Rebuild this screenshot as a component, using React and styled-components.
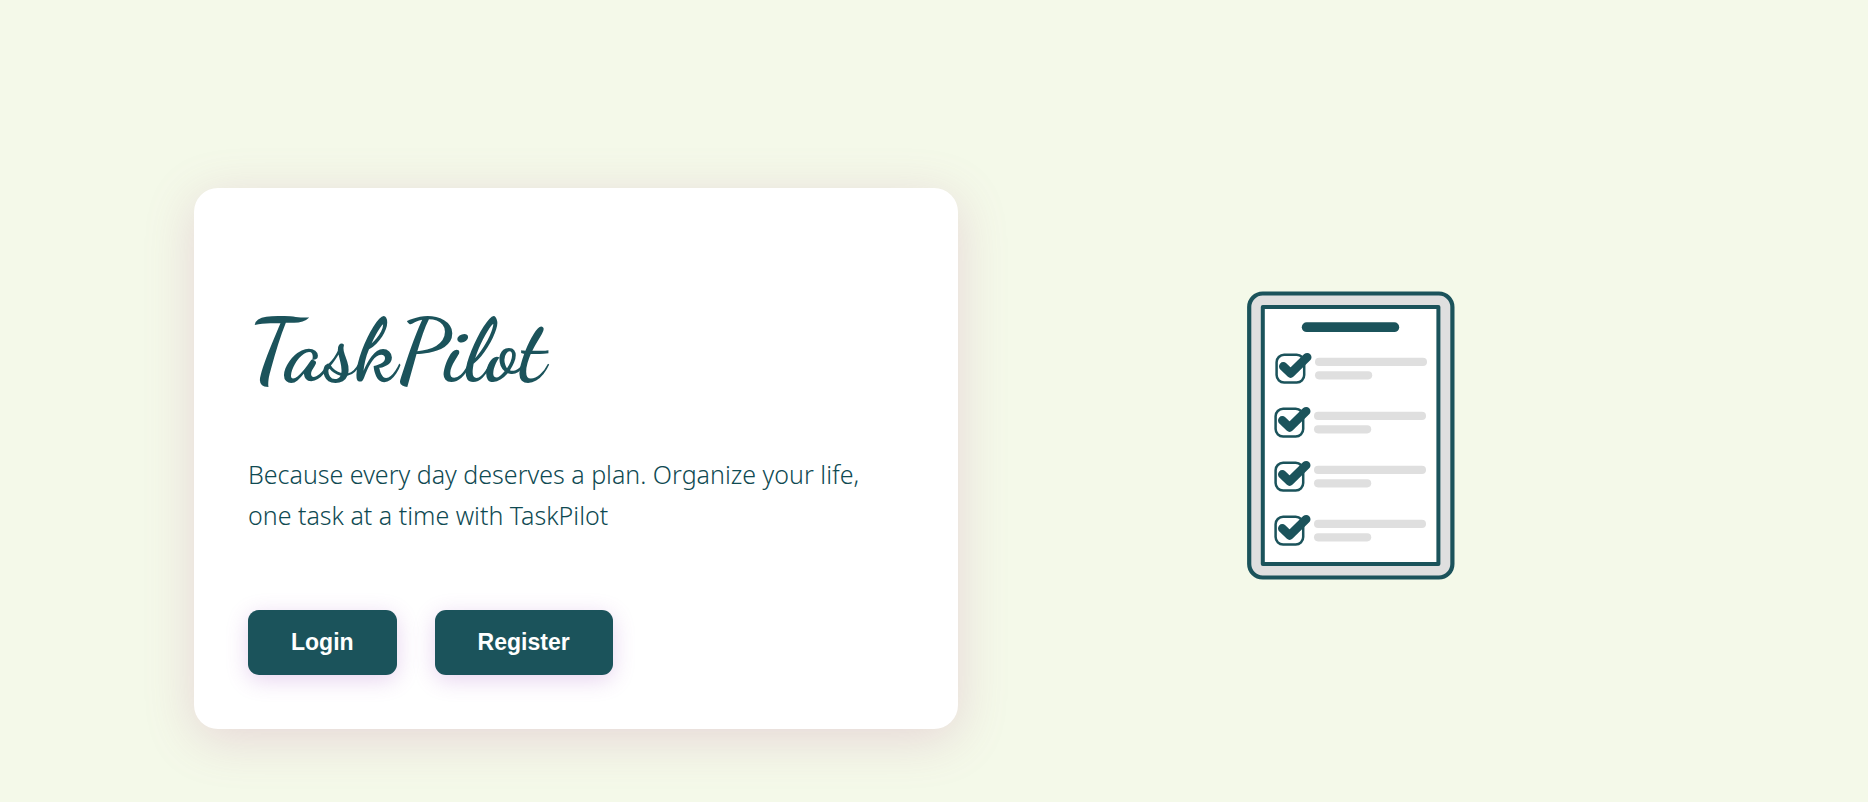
import React from "react";
import styled, { createGlobalStyle } from "styled-components";

const ink = "#1b535b";
const paper = "#f4f9e9";
const grey = "#dfdfdf";

const GlobalStyle = createGlobalStyle`
  *, *::before, *::after { box-sizing: border-box; }
  body {
    margin: 0;
    background: ${paper};
    color: ${ink};
    font-family: "Segoe UI", "Noto Sans", "Open Sans", sans-serif;
  }
`;

const Page = styled.main`
  min-height: 100vh;
  padding: 188px 32px 72px;
`;

const Hero = styled.div`
  display: grid;
  grid-template-columns: 764fr 646fr;
  align-items: center;
  gap: 70px;
  max-width: 1480px;
  margin: 0 auto;

  @media (max-width: 1000px) {
    grid-template-columns: 1fr;
  }
`;

const Card = styled.section`
  padding: 111px 54px 54px;
  border-radius: 24px;
  background: #fff;
  box-shadow: 0 10px 50px rgba(180, 90, 150, 0.22);
`;

const Title = styled.h1`
  margin: 0 0 51px;
  font-family: "Dancing Script", "Liberation Serif", cursive;
  font-size: 88px;
  font-weight: 700;
  line-height: 104px;
`;

const Tagline = styled.p`
  margin: 0 0 74px;
  color: #0f4a52;
  font-size: 25px;
  font-weight: 350;
  line-height: 41px;
`;

const Actions = styled.div`
  display: flex;
  flex-wrap: wrap;
  gap: 38px;
`;

const Button = styled.button`
  padding: 0 43px;
  border: 0;
  border-radius: 11px;
  background: ${ink};
  color: #fff;
  font-family: "Liberation Sans", Arial, sans-serif;
  font-size: 23px;
  font-weight: 700;
  line-height: 65px;
  box-shadow: 0 5px 22px rgba(155, 70, 190, 0.24);
  cursor: pointer;
`;

const Figure = styled.div`
  display: flex;
  justify-content: center;
  padding-bottom: 47px;
`;

const Drawing = styled.svg`
  display: block;
  width: 208px;
  height: 289px;
`;

const rows = [
  { x: 1, y: 0 },
  { x: 0, y: 54 },
  { x: 0, y: 108 },
  { x: 0, y: 162 },
];

function Checklist() {
  return (
    <Drawing viewBox="0 0 208 289" role="img" aria-label="Checklist">
      <rect x="2.2" y="2.5" width="203.2" height="284" rx="13.5" fill={grey} stroke={ink} strokeWidth="4.2" />
      <rect x="15.8" y="16" width="175.6" height="257" fill="#fff" stroke={ink} strokeWidth="4" strokeLinejoin="round" />
      <rect x="54.8" y="31.3" width="97.4" height="9.8" rx="4.9" fill={ink} />
      {rows.map(({ x, y }) => (
        <g key={y} transform={`translate(${x} ${y})`}>
          <rect x="28.6" y="63.8" width="27.6" height="27.8" rx="7.5" fill="none" stroke={ink} strokeWidth="2.5" />
          <path d="M35.3 75.4 42.6 82.4 59.2 66.2" fill="none" stroke={ink} strokeWidth="8.6" strokeLinecap="round" strokeLinejoin="round" />
          <rect x="67" y="66.8" width="112" height="8.2" rx="4.1" fill={grey} />
          <rect x="67" y="80.2" width="57.2" height="8.2" rx="4.1" fill={grey} />
        </g>
      ))}
    </Drawing>
  );
}

export default function App() {
  return (
    <>
      <GlobalStyle />
      <Page>
        <Hero>
          <Card>
            <Title>TaskPilot</Title>
            <Tagline>
              Because every day deserves a plan. Organize your life, one task at a time with TaskPilot
            </Tagline>
            <Actions>
              <Button type="button">Login</Button>
              <Button type="button">Register</Button>
            </Actions>
          </Card>
          <Figure>
            <Checklist />
          </Figure>
        </Hero>
      </Page>
    </>
  );
}
